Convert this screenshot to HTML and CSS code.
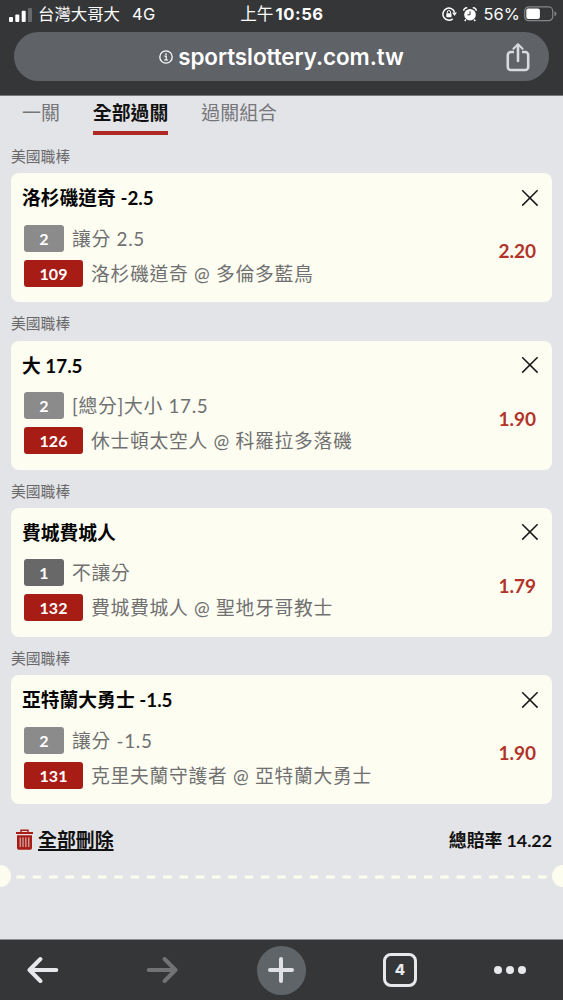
FILE: index.html
```html
<!DOCTYPE html>
<html lang="zh-Hant">
<head>
<meta charset="utf-8">
<title>sportslottery.com.tw</title>
<link rel="stylesheet" href="styles.css">
</head>
<body>
<svg class="defs" width="0" height="0">
  <symbol id="close" viewBox="0 0 18 18"><path d="M1.2 1.2L16.6 16.6M16.6 1.2L1.2 16.6" fill="none" stroke="#171717" stroke-width="1.5"/></symbol>
</svg>
<header class="chrome">
  <div class="status">
    <div class="carrier">
      <svg width="24" height="16" viewBox="0 0 24 16"><g fill="#fff"><rect x="0" y="10" width="4" height="5" rx="1"/><rect x="6.3" y="7.4" width="4" height="7.6" rx="1"/><rect x="12.7" y="3.8" width="4" height="11.2" rx="1"/><rect x="19" y="1" width="4" height="14" rx="1" opacity=".25"/></g></svg>
      <span class="operator">台灣大哥大</span><span class="network">4G</span>
    </div>
    <div class="clock"><span class="ampm">上午</span><span class="time">10:56</span></div>
    <div class="power">
      <svg width="15" height="14" viewBox="0 0 15 14"><path d="M12.6 5.2A6 6 0 1 0 10.7 11.8" fill="none" stroke="#fff" stroke-width="1.5"/><path d="M10.1 5.5h4.8l-2.4 3.4z" fill="#fff"/><rect x="4.3" y="6.2" width="5.2" height="4" rx=".7" fill="#fff"/><path d="M5.3 6.5V5.1a1.6 1.6 0 0 1 3.2 0v1.4" fill="none" stroke="#fff" stroke-width="1"/></svg>
      <svg class="alarm" width="14" height="15" viewBox="0 0 14 15"><circle cx="7" cy="7.7" r="5.8" fill="#fff"/><path d="M.7 3.8A3 3 0 0 1 4.2.8M9.8.8a3 3 0 0 1 3.5 3M3 12.5l-1.3 1.4M11 12.5l1.3 1.4" fill="none" stroke="#fff" stroke-width="1.5"/><path d="M7 4.2v3.6H4.3" fill="none" stroke="#353638" stroke-width="1"/></svg>
      <span class="percent">56%</span>
      <svg width="33" height="16" viewBox="0 0 33 16"><rect x=".7" y=".9" width="28" height="13.8" rx="4" fill="none" stroke="#85868a" stroke-width="1.2"/><rect x="2.3" y="2.6" width="13.6" height="10.4" rx="2" fill="#fff"/><path d="M30.5 5.3q2 .8 2 2.5t-2 2.5z" fill="#85868a"/></svg>
    </div>
  </div>
  <div class="address">
    <svg width="14" height="14" viewBox="0 0 14 14" fill="none" stroke="#fff"><circle cx="7" cy="7" r="6.2" stroke-width="1.3"/><path d="M5.4 6.2h1.8v3.7M5.1 10h4" stroke-width="1.2"/><path d="M6.3 4h1.5" stroke-width="1.5"/></svg>
    <span class="host">sportslottery.com.tw</span>
    <svg class="share" width="24" height="30" viewBox="0 0 24 30" fill="none" stroke="#d8dadd" stroke-width="2.6" stroke-linejoin="round"><path d="M8 10H4.8A3 3 0 0 0 1.8 13v12a3 3 0 0 0 3 3h14.4a3 3 0 0 0 3-3V13a3 3 0 0 0-3-3H16" /><path d="M12 19V3" stroke-linecap="round"/><path d="M7.4 6.8L12 2.2l4.6 4.6"  stroke-width="2" stroke-linecap="round"/></svg>
  </div>
</header>
<main class="slip">
  <nav class="tabs"><a>一關</a><a class="active">全部過關</a><a>過關組合</a></nav>
  <section class="bet">
    <h2>美國職棒</h2>
    <article class="card">
      <div class="pick"><h3>洛杉磯道奇 -2.5</h3><p><b class="type">2</b><span>讓分 2.5</span></p><p><b class="code">109</b><span>洛杉磯道奇 @ 多倫多藍鳥</span></p></div>
      <svg class="close" width="18" height="18"><use href="#close"/></svg><strong class="odds">2.20</strong>
    </article>
  </section>
  <section class="bet">
    <h2>美國職棒</h2>
    <article class="card">
      <div class="pick"><h3>大 17.5</h3><p><b class="type">2</b><span>[總分]大小 17.5</span></p><p><b class="code">126</b><span>休士頓太空人 @ 科羅拉多落磯</span></p></div>
      <svg class="close" width="18" height="18"><use href="#close"/></svg><strong class="odds">1.90</strong>
    </article>
  </section>
  <section class="bet">
    <h2>美國職棒</h2>
    <article class="card">
      <div class="pick"><h3>費城費城人</h3><p><b class="type dark">1</b><span>不讓分</span></p><p><b class="code">132</b><span>費城費城人 @ 聖地牙哥教士</span></p></div>
      <svg class="close" width="18" height="18"><use href="#close"/></svg><strong class="odds">1.79</strong>
    </article>
  </section>
  <section class="bet">
    <h2>美國職棒</h2>
    <article class="card">
      <div class="pick"><h3>亞特蘭大勇士 -1.5</h3><p><b class="type">2</b><span>讓分 -1.5</span></p><p><b class="code">131</b><span>克里夫蘭守護者 @ 亞特蘭大勇士</span></p></div>
      <svg class="close" width="18" height="18"><use href="#close"/></svg><strong class="odds">1.90</strong>
    </article>
  </section>
  <div class="summary">
    <a class="clear"><svg width="17" height="21" viewBox="0 0 17 21"><path d="M5 3V1.2h7V3" fill="none" stroke="#a71d15" stroke-width="1.4"/><path d="M0 3h17v2H0z" fill="#a71d15"/><path d="M1 6.3h15V19a1.7 1.7 0 0 1-1.7 1.7H2.7A1.7 1.7 0 0 1 1 19z" fill="#a71d15"/><path d="M4.2 8.5v9.6M7 8.5v9.6M9.9 8.5v9.6M12.8 8.5v9.6" stroke="#e3e4e7" stroke-width=".9"/></svg><span>全部刪除</span></a>
    <span class="total">總賠率 14.22</span>
  </div>
  <div class="tear"><i class="notch"></i><svg width="531" height="4"><path d="M.5 2H531" stroke="#fdfdef" stroke-width="3" stroke-dasharray="8.4 7.9"/></svg><i class="notch"></i></div>
</main>
<footer class="toolbar">
  <svg width="32" height="28" viewBox="0 0 32 28"><path d="M29.3 14H3M13.4 3L2.5 14l10.9 11" fill="none" stroke="#e7e8eb" stroke-width="4" stroke-linecap="round" stroke-linejoin="round"/></svg>
  <svg width="32" height="28" viewBox="0 0 32 28"><path d="M2.7 14H29M18.6 3l10.9 11-10.9 11" fill="none" stroke="#727375" stroke-width="4" stroke-linecap="round" stroke-linejoin="round"/></svg>
  <span class="add"><svg width="26" height="26" viewBox="0 0 26 26"><path d="M2 13h22M13 2v22" stroke="#dfe0e3" stroke-width="4" stroke-linecap="round"/></svg></span>
  <span class="count">4</span>
  <svg width="32" height="8" viewBox="0 0 32 8" fill="#e7e8eb"><circle cx="4" cy="4" r="4"/><circle cx="16" cy="4" r="4"/><circle cx="28" cy="4" r="4"/></svg>
</footer>
</body>
</html>
```
FILE: styles.css
```css
* { box-sizing: border-box; }
body { margin: 0; width: 563px; height: 1000px; overflow: hidden; display: flex; flex-direction: column; background: #e3e4e7; font-family: Lato, "Noto Sans CJK TC", sans-serif; }
.defs { display: none; }
h2, h3, p { margin: 0; }
svg { flex: none; display: block; }
span, a, b, h2, h3 { white-space: nowrap; }

.chrome { height: 96px; flex: none; background: #353638; border-bottom: 1px solid #77787a; color: #fff; font-family: Inter, "Noto Sans CJK TC", sans-serif; }
.status { height: 32.4px; padding: 0 6px 0 9px; display: grid; grid-template-columns: 1fr auto 1fr; align-items: start; line-height: 28px; }
.carrier, .power, .clock { display: flex; align-items: center; height: 28px; }
.carrier svg { margin-top: 1px; }
.operator { margin-left: 5px; font-size: 16.4px; font-weight: 400; }
.network { margin-left: 12px; font-size: 16.4px; letter-spacing: .4px; }
.clock { font-size: 16.6px; margin-left: -2px; }
.ampm { font-weight: 400; }
.time { font-weight: 700; margin-left: 2px; letter-spacing: .6px; }
.power { justify-content: flex-end; }
.power > svg:first-child { margin-right: -1px; }
.alarm { margin-left: 7px; }
.percent { font-size: 16.4px; margin: 0 4px 0 6px; letter-spacing: .1px; }
.address { position: relative; margin: 0 14px; height: 49px; border-radius: 25px; background: #5f6267; display: flex; align-items: center; justify-content: center; gap: 5px; }
.host { font-size: 22.4px; font-weight: 600; letter-spacing: -.05px; line-height: 46px; }
.share { position: absolute; right: 19px; top: 10px; }

.slip { flex: 1; }
.tabs { height: 38.8px; padding-left: 22px; display: flex; gap: 33px; font-size: 18.9px; line-height: 33px; color: #75767a; }
.tabs .active { color: #111; font-weight: 700; border-bottom: 4px solid #af2824; }
.bet { height: 167.4px; }
.bet h2 { height: 38.4px; padding-left: 11px; font-size: 14.8px; line-height: 43.5px; font-weight: 400; color: #69696b; }
.card { margin: 0 11px; height: 129px; border-radius: 8px; background: #fdfdf2; display: grid; grid-template-columns: 1fr auto; grid-template-rows: 50px 1fr; }
.pick { grid-row: 1 / 3; }
.pick h3 { height: 48.5px; padding-left: 11px; font-size: 18.8px; line-height: 49.5px; color: #050505; }
.pick p { height: 27px; margin: 3px 0 8px 13px; display: flex; align-items: center; gap: 8px; font-size: 18.8px; letter-spacing: .72px; line-height: 27px; color: #707070; }
.pick b { height: 27px; border-radius: 3px; color: #fff; font-size: 16px; letter-spacing: 0; text-align: center; line-height: 27.5px; }
.pick p span { height: 27px; }
.type { width: 40px; background: #8b8b8b; }
.type.dark { background: #686868; }
.code { width: 59px; background: #a71d15; }
.close { margin: 15.5px 13px 0 auto; }
.odds { padding-right: 16px; font-size: 19px; line-height: 55px; color: #b23329; }
.summary { display: flex; justify-content: space-between; padding: 0 11px 0 16px; height: 61px; line-height: 72px; font-size: 18.9px; font-weight: 700; color: #111; }
.clear { display: flex; gap: 5px; }
.clear svg { margin-top: 25px; }
.clear span { text-decoration: underline; text-decoration-thickness: 1.5px; text-underline-offset: 2px; }
.total { font-size: 17.8px; }
.tear { margin: 0 -11px; display: flex; align-items: center; justify-content: space-between; height: 22px; }
.tear svg { margin-top: 2px; }
.notch { width: 22px; height: 22px; border-radius: 50%; background: #fdfdef; }

.toolbar { height: 61px; flex: none; border-top: 1px solid #8c8d8f; background: #353638; padding-right: 19px; display: grid; grid-template-columns: 86px 152px 86px 152px 1fr; justify-items: center; align-items: center; }
.add { width: 49px; height: 49px; border-radius: 50%; background: #5f6468; display: flex; align-items: center; justify-content: center; }
.count { width: 34px; height: 34px; border: 3.5px solid #e7e8eb; border-radius: 8px; color: #e7e8eb; font: 800 15px/28px Inter, sans-serif; text-align: center; }
```
